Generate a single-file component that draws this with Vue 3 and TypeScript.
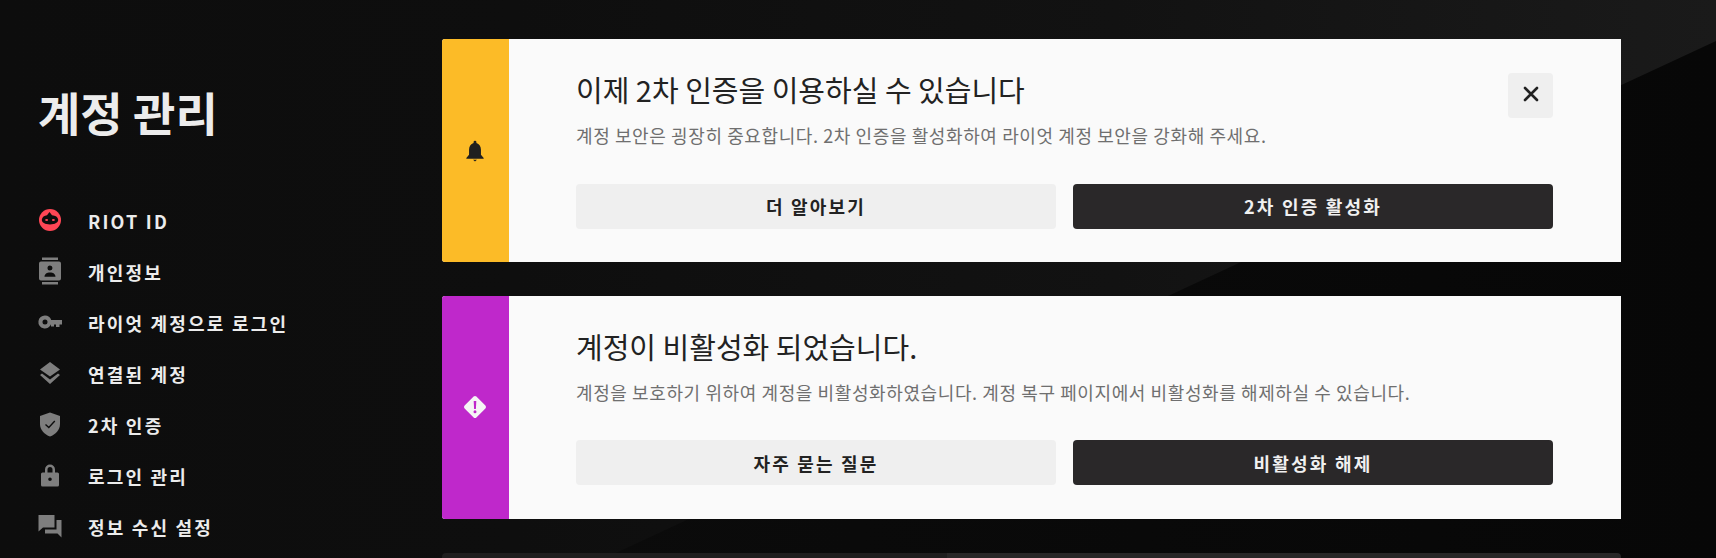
<script setup lang="ts">
interface NavItem { id: string; label: string }
interface Notice {
  id: string; title: string; desc: string; tone: string;
  secondary: string; primary: string; closable: boolean;
}
const nav: NavItem[] = [
  { id: 'riot', label: 'RIOT ID' },
  { id: 'person', label: '개인정보' },
  { id: 'key', label: '라이엇 계정으로 로그인' },
  { id: 'layers', label: '연결된 계정' },
  { id: 'shield', label: '2차 인증' },
  { id: 'lock', label: '로그인 관리' },
  { id: 'chat', label: '정보 수신 설정' },
]
const notices: Notice[] = [
  { id: 'bell', title: '이제 2차 인증을 이용하실 수 있습니다', desc: '계정 보안은 굉장히 중요합니다. 2차 인증을 활성화하여 라이엇 계정 보안을 강화해 주세요.', tone: 'yellow', secondary: '더 알아보기', primary: '2차 인증 활성화', closable: true },
  { id: 'warn', title: '계정이 비활성화 되었습니다.', desc: '계정을 보호하기 위하여 계정을 비활성화하였습니다. 계정 복구 페이지에서 비활성화를 해제하실 수 있습니다.', tone: 'purple', secondary: '자주 묻는 질문', primary: '비활성화 해제', closable: false },
]
</script>

<template>
  <div class="page">
    <aside class="side">
      <h1 class="heading">계정 관리</h1>
      <ul class="menu">
        <li v-for="item in nav" :key="item.id" class="menu-item">
          <svg class="menu-icon" viewBox="0 0 24 24" aria-hidden="true">
            <template v-if="item.id === 'riot'">
              <circle cx="12" cy="12" r="11" fill="#ff4655" />
              <path d="M3.8 11.8C4 9 6.5 7.5 9 7.2L11.5 4 14 7.2C17.5 7.5 20 9 20.2 11.8 20.2 14.5 17 16.5 12 16.5S3.8 14.5 3.8 11.8Z" fill="#0d0d0d" />
              <ellipse cx="8.6" cy="12" rx="1.5" ry="1.1" fill="#ff4655" />
              <ellipse cx="15.4" cy="12" rx="1.5" ry="1.1" fill="#ff4655" />
            </template>
            <template v-else-if="item.id === 'person'">
              <path d="M4 -1.5H20V1H4ZM4 23H20V25.5H4Z" fill="#7e7e7e" />
              <path fill-rule="evenodd" clip-rule="evenodd" d="M3 2.5H21A2 2 0 0 1 23 4.5V19.5A2 2 0 0 1 21 21.5H3A2 2 0 0 1 1 19.5V4.5A2 2 0 0 1 3 2.5ZM12 6.5A2.5 2.5 0 1 0 12 11.5 2.5 2.5 0 0 0 12 6.5ZM6.5 17.8H17.5C17.5 15 15 13.5 12 13.5S6.5 15 6.5 17.8Z" fill="#7e7e7e" />
            </template>
            <template v-else-if="item.id === 'key'">
              <path fill-rule="evenodd" clip-rule="evenodd" d="M7 5.5A6.5 6.5 0 0 1 13.2 10H24V14.5H21.5V17H18V14.5H16V16.5H13V14.2A6.5 6.5 0 1 1 7 5.5ZM7 9.5A2.5 2.5 0 1 0 7 14.5 2.5 2.5 0 0 0 7 9.5Z" fill="#7e7e7e" />
            </template>
            <template v-else-if="item.id === 'layers'">
              <path d="M12 1L22 8.5 12 15.5 2 8.5Z" fill="#7e7e7e" />
              <path d="M2 14L4 12.5 12 18.5 20 12.5 22 14 12 23Z" fill="#7e7e7e" />
            </template>
            <template v-else-if="item.id === 'shield'">
              <path d="M12 0.5L22 4V12C22 18 17.5 22.5 12 24.5 6.5 22.5 2 18 2 12V4Z" fill="#7e7e7e" />
              <path d="M7.5 12.5L10.8 15.5 16.8 9" fill="none" stroke="#0d0d0d" stroke-width="1.4" />
            </template>
            <template v-else-if="item.id === 'lock'">
              <path fill-rule="evenodd" clip-rule="evenodd" d="M7 9.5V6.5A5 5 0 0 1 17 6.5V9.5H19.5A1.5 1.5 0 0 1 21 11V22A1.5 1.5 0 0 1 19.5 23.5H4.5A1.5 1.5 0 0 1 3 22V11A1.5 1.5 0 0 1 4.5 9.5ZM9.5 9.5H14.5V6.5A2.5 2.5 0 0 0 9.5 6.5ZM12 14.5A1.8 1.8 0 1 0 12 18.1 1.8 1.8 0 0 0 12 14.5Z" fill="#7e7e7e" />
            </template>
            <template v-else>
              <path d="M0.5 1H16.5V13.5H5L0.5 17.5Z" fill="#7e7e7e" />
              <path d="M18.5 6H23.5V23.5L19.5 19.5H7V15.5H18.5Z" fill="#7e7e7e" />
            </template>
          </svg>
          <span class="menu-label">{{ item.label }}</span>
        </li>
      </ul>
    </aside>

    <main class="content">
      <section v-for="n in notices" :key="n.id" class="notice">
        <div class="strip" :class="n.tone">
          <svg v-if="n.id === 'bell'" class="strip-icon bell" viewBox="0 0 24 24" aria-hidden="true">
            <path d="M12 2.5A1.3 1.3 0 0 1 13.3 3.8V4.6C16 5.3 17.5 8 17.5 10.8V15.5L20 18.5V19.2H4V18.5L6.5 15.5V10.8C6.5 8 8 5.3 10.7 4.6V3.8A1.3 1.3 0 0 1 12 2.5ZM10.2 20H13.8L12 21.8Z" fill="#1f1f1f" />
          </svg>
          <svg v-else class="strip-icon" viewBox="0 0 24 24" aria-hidden="true">
            <path fill-rule="evenodd" clip-rule="evenodd" d="M10.6 1.6A2 2 0 0 1 13.4 1.6L22.4 10.6A2 2 0 0 1 22.4 13.4L13.4 22.4A2 2 0 0 1 10.6 22.4L1.6 13.4A2 2 0 0 1 1.6 10.6ZM10.7 6H13.3L12.9 14H11.1ZM12 15.2A1.5 1.5 0 1 0 12 18.2 1.5 1.5 0 0 0 12 15.2Z" fill="#f5f5f5" />
          </svg>
        </div>
        <div class="body">
          <h2 class="title">{{ n.title }}</h2>
          <p class="desc">{{ n.desc }}</p>
          <div class="actions">
            <button class="btn light" type="button">{{ n.secondary }}</button>
            <button class="btn dark" type="button">{{ n.primary }}</button>
          </div>
          <button v-if="n.closable" class="close" type="button" aria-label="닫기">
            <svg class="close-icon" viewBox="0 0 16 16" aria-hidden="true">
              <path d="M2 2L14 14M14 2L2 14" stroke="#222" stroke-width="2.6" stroke-linecap="round" fill="none" />
            </svg>
          </button>
        </div>
      </section>
      <section class="notice-dark">
        <div class="dark-left"></div>
        <div class="dark-right"></div>
      </section>
    </main>
  </div>
</template>

<style>
html, body { margin: 0; background: #0a0a0a; }
</style>

<style scoped>
.page {
  position: relative;
  display: flex;
  width: 1716px;
  height: 558px;
  overflow: hidden;
  background: linear-gradient(90deg, #0d0d0d 0%, #0a0a0a 50%, #070707 100%);
  font-family: "Noto Sans CJK KR", "Noto Sans", sans-serif;
}
.page::before {
  content: "";
  position: absolute;
  inset: 0;
  background: linear-gradient(90deg, #0d0d0d 0%, #0e0e0e 30%, #121212 65%, #1a1a1a 100%);
  clip-path: polygon(0 0, 1716px 0, 1716px 41px, 605px 558px, 0 558px);
}
.side {
  position: relative;
  flex: 0 0 442px;
  box-sizing: border-box;
  padding: 79px 0 0 38px;
}
.heading {
  margin: 0 0 64px;
  font-size: 46px;
  line-height: 64px;
  font-weight: 700;
  color: #ececec;
}
.menu {
  margin: 0;
  padding: 0;
  list-style: none;
  display: flex;
  flex-direction: column;
  gap: 23px;
}
.menu-item {
  display: flex;
  align-items: center;
  gap: 26px;
  height: 28px;
}
.menu-icon {
  width: 24px;
  height: 24px;
  flex: none;
  overflow: visible;
  margin-bottom: 2px;
}
.menu-label {
  font-size: 18px;
  font-weight: 700;
  letter-spacing: 2.2px;
  color: #ececec;
  white-space: nowrap;
}
.content {
  position: relative;
  flex: 0 0 1179px;
  padding-top: 38.75px;
  display: flex;
  flex-direction: column;
  gap: 33.85px;
}
.notice {
  display: flex;
  height: 223px;
  flex: none;
  border-radius: 3px 0 0 3px;
  overflow: hidden;
  background: #fafafa;
}
.strip {
  flex: 0 0 67px;
  display: flex;
  align-items: center;
  justify-content: center;
}
.strip.yellow { background: #fcbb27; }
.strip.purple { background: #bf28cb; }
.strip-icon { width: 24px; height: 24px; margin-right: 1px; }
.strip-icon.bell { width: 26px; height: 26px; margin-top: 2px; }
.body {
  position: relative;
  flex: 1;
  box-sizing: border-box;
  padding: 30px 68px 33.2px 67px;
  display: flex;
  flex-direction: column;
}
.title {
  margin: 0;
  font-size: 29px;
  line-height: 40px;
  font-weight: 400;
  color: #222;
}
.desc {
  margin: 14px 0 0;
  font-size: 18px;
  line-height: 24px;
  letter-spacing: 0.6px;
  font-weight: 400;
  color: #6f6f6f;
}
.actions {
  margin-top: auto;
  display: grid;
  grid-template-columns: 1fr 1fr;
  gap: 17px;
}
.btn {
  height: 45px;
  border: 0;
  border-radius: 4px;
  font-family: inherit;
  font-size: 18px;
  font-weight: 700;
  letter-spacing: 2.2px;
}
.btn.light { background: #efefef; color: #222; }
.btn.dark { background: #2a2829; color: #f0f0f0; }
.close {
  position: absolute;
  top: 34.25px;
  right: 68px;
  width: 45px;
  height: 45px;
  padding: 0;
  border: 0;
  border-radius: 4px;
  background: #efefef;
  display: flex;
  align-items: center;
  justify-content: center;
}
.close-icon {
  width: 16px;
  height: 16px;
  margin-bottom: 4px;
}
.notice-dark {
  display: flex;
  flex: none;
  height: 40px;
  margin-top: 0.5px;
  border-radius: 4px 4px 0 0;
  overflow: hidden;
}
.dark-left { flex: 0 0 505px; background: #1f1e1e; }
.dark-right { flex: 1; background: #282727; }
</style>
